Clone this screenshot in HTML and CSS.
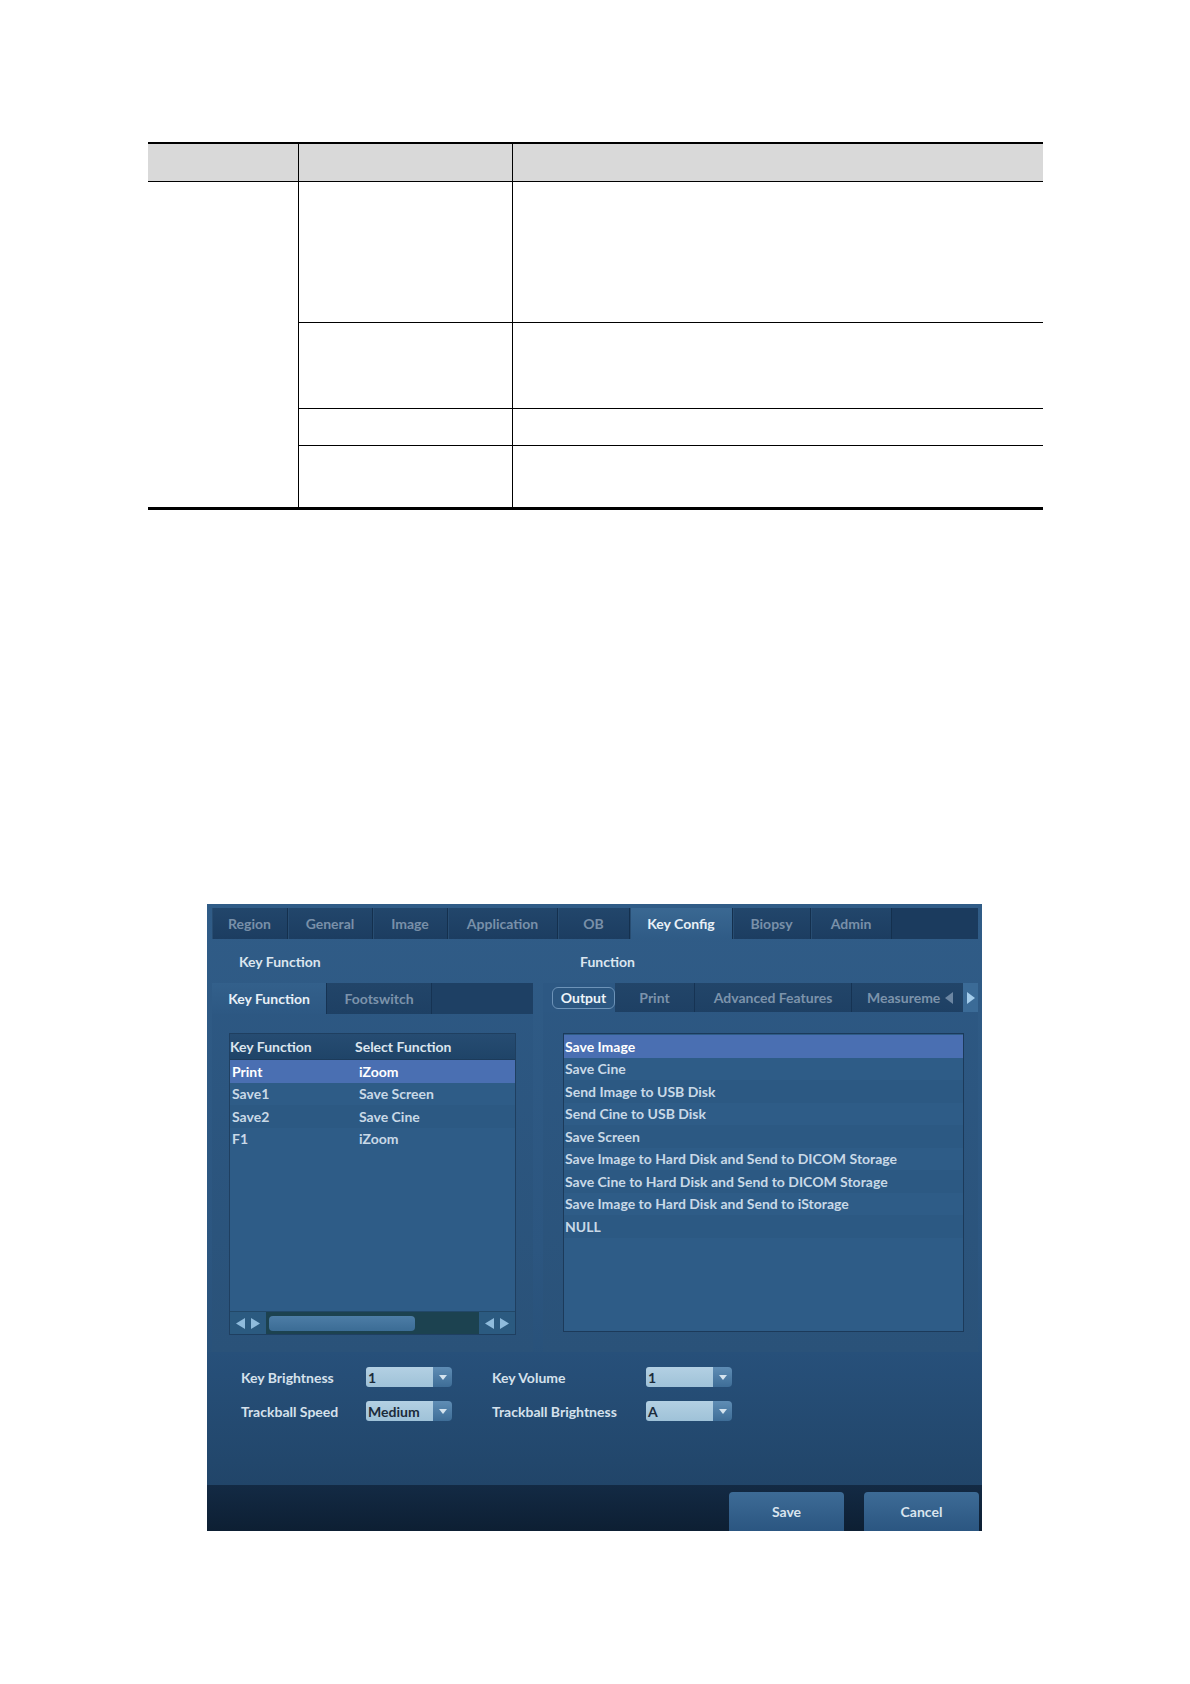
FILE: index.html
```html
<!DOCTYPE html>
<html lang="en">
<head>
<meta charset="utf-8">
<title>Key Config</title>
<link rel="stylesheet" href="styles.css">
</head>
<body>
<div class="page">
  <div class="spec">
    <div class="cell hd c1"></div>
    <div class="cell hd c2"></div>
    <div class="cell hd c3"></div>
    <div class="cell c1 span"></div>
    <div class="cell c2 rl"></div>
    <div class="cell c3 rl"></div>
    <div class="cell c2 rl"></div>
    <div class="cell c3 rl"></div>
    <div class="cell c2 rl"></div>
    <div class="cell c3 rl"></div>
    <div class="cell c2"></div>
    <div class="cell c3"></div>
  </div>

  <div class="ui">
    <div class="tabbar">
      <div class="tab w76">Region</div>
      <div class="tab w85">General</div>
      <div class="tab w75">Image</div>
      <div class="tab w110">Application</div>
      <div class="tab w72">OB</div>
      <div class="tab w103 active">Key Config</div>
      <div class="tab w78">Biopsy</div>
      <div class="tab w81">Admin</div>
    </div>

    <div class="heads">
      <div class="head-l">Key Function</div>
      <div class="head-r">Function</div>
    </div>

    <div class="panels">
      <div class="lpanel">
        <div class="subbar">
          <div class="stab active w115">Key Function</div>
          <div class="stab w105">Footswitch</div>
        </div>
        <div class="llist">
          <div class="lhead"><span class="k">Key Function</span><span class="s">Select Function</span></div>
          <div class="lbody">
            <div class="lrow sel"><span class="k">Print</span><span class="s">iZoom</span></div>
            <div class="lrow"><span class="k">Save1</span><span class="s">Save Screen</span></div>
            <div class="lrow alt"><span class="k">Save2</span><span class="s">Save Cine</span></div>
            <div class="lrow"><span class="k">F1</span><span class="s">iZoom</span></div>
          </div>
          <div class="scroll">
            <div class="arrows">
              <svg width="11" height="13" viewBox="0 0 11 13"><path d="M10 1 L1 6.5 L10 12 Z" fill="#8fbbdc"/></svg>
              <svg width="11" height="13" viewBox="0 0 11 13"><path d="M1 1 L10 6.5 L1 12 Z" fill="#8fbbdc"/></svg>
            </div>
            <div class="track"><div class="thumb"></div></div>
            <div class="arrows">
              <svg width="11" height="13" viewBox="0 0 11 13"><path d="M10 1 L1 6.5 L10 12 Z" fill="#8fbbdc"/></svg>
              <svg width="11" height="13" viewBox="0 0 11 13"><path d="M1 1 L10 6.5 L1 12 Z" fill="#8fbbdc"/></svg>
            </div>
          </div>
        </div>
      </div>

      <div class="rpanel">
        <div class="subbar rbar">
          <div class="pill-wrap"><div class="pill">Output</div></div>
          <div class="stab w80">Print</div>
          <div class="stab w157">Advanced Features</div>
          <div class="stab meas">Measureme
            <svg class="larr" width="10" height="14" viewBox="0 0 10 14"><path d="M9 1 L1 7 L9 13 Z" fill="#6c86a2"/></svg>
          </div>
          <div class="rarr">
            <svg width="10" height="14" viewBox="0 0 10 14"><path d="M1 1 L9 7 L1 13 Z" fill="#a4cdec"/></svg>
          </div>
        </div>
        <div class="rlist">
          <div class="rrow sel">Save Image</div>
          <div class="rrow">Save Cine</div>
          <div class="rrow alt">Send Image to USB Disk</div>
          <div class="rrow">Send Cine to USB Disk</div>
          <div class="rrow alt">Save Screen</div>
          <div class="rrow">Save Image to Hard Disk and Send to DICOM Storage</div>
          <div class="rrow alt">Save Cine to Hard Disk and Send to DICOM Storage</div>
          <div class="rrow">Save Image to Hard Disk and Send to iStorage</div>
          <div class="rrow alt">NULL</div>
        </div>
      </div>
    </div>

    <div class="settings">
      <div class="lbl">Key Brightness</div>
      <div class="dd"><div class="field">1</div><div class="btn"><svg width="8" height="5" viewBox="0 0 8 5"><path d="M0 0 H8 L4 5 Z" fill="#d5e4ef"/></svg></div></div>
      <div></div>
      <div class="lbl">Key Volume</div>
      <div class="dd"><div class="field">1</div><div class="btn"><svg width="8" height="5" viewBox="0 0 8 5"><path d="M0 0 H8 L4 5 Z" fill="#d5e4ef"/></svg></div></div>
      <div class="lbl">Trackball Speed</div>
      <div class="dd"><div class="field">Medium</div><div class="btn"><svg width="8" height="5" viewBox="0 0 8 5"><path d="M0 0 H8 L4 5 Z" fill="#d5e4ef"/></svg></div></div>
      <div></div>
      <div class="lbl">Trackball Brightness</div>
      <div class="dd"><div class="field">A</div><div class="btn"><svg width="8" height="5" viewBox="0 0 8 5"><path d="M0 0 H8 L4 5 Z" fill="#d5e4ef"/></svg></div></div>
    </div>

    <div class="footer">
      <div class="fbtn">Save</div>
      <div class="fbtn">Cancel</div>
    </div>
  </div>
</div>
</body>
</html>
```

FILE: styles.css
```css
* { box-sizing: border-box; }
html, body { margin: 0; padding: 0; background: #ffffff; }
body { font-family: Lato, "Open Sans", "Liberation Sans", sans-serif; }

.page { padding-top: 142px; }

/* ---------- blank spec table ---------- */
.spec {
  width: 895px;
  margin-left: 148px;
  border-top: 2px solid #000;
  border-bottom: 3px solid #000;
  display: grid;
  grid-template-columns: 150px 214px 531px;
  grid-template-rows: 38px 141px 86px 37px 61px;
}
.cell { background: #fff; }
.cell.hd { background: #d9d9d9; border-bottom: 1px solid #000; }
.cell.c2, .cell.c3 { border-left: 1px solid #000; }
.cell.rl { border-bottom: 1px solid #000; }
.cell.span { grid-row: 2 / span 4; }

/* ---------- ultrasound UI ---------- */
.ui {
  width: 775px;
  height: 627px;
  margin: 394px 0 0 207px;
  padding-top: 4px;
  background: linear-gradient(180deg, #305c87 0%, #2c5680 55%, #234a70 100%);
  display: flex;
  flex-direction: column;
  color: #c9d9e7;
  font-weight: 700;
  font-size: 14px;
}

.tabbar {
  margin: 0 4px 0 5px;
  height: 31px;
  background: #1b3b5e;
  display: flex;
}
.tab {
  display: flex;
  align-items: center;
  justify-content: center;
  color: #7990a9;
  background: linear-gradient(180deg, #22466b 0%, #1c3d61 100%);
  border-right: 1px solid #14304e;
  box-shadow: inset 1px 0 0 #284d72;
}
.tab.active {
  color: #e8f0f7;
  background: linear-gradient(180deg, #3a6892 0%, #2f5b86 100%);
}
.w72 { width: 72px; } .w75 { width: 75px; } .w76 { width: 76px; }
.w78 { width: 78px; } .w80 { width: 80px; } .w81 { width: 81px; }
.w85 { width: 85px; } .w103 { width: 103px; } .w105 { width: 105px; }
.w110 { width: 110px; } .w115 { width: 115px; } .w157 { width: 157px; }

.heads {
  height: 44px;
  display: flex;
  align-items: center;
  color: #dce6ef;
}
.head-l { width: 373px; padding-left: 32px; }

.panels {
  display: flex;
  gap: 10px;
  height: 369px;
  padding-left: 5px;
}
.lpanel {
  width: 321px;
  background: linear-gradient(180deg, #2d5883 0%, #2a5279 100%);
  display: flex;
  flex-direction: column;
}
.rpanel {
  width: 435px;
  background: linear-gradient(180deg, #2d5883 0%, #2a5279 100%);
  display: flex;
  flex-direction: column;
}

.subbar {
  height: 31px;
  background: #1e4064;
  display: flex;
  flex-shrink: 0;
}
.rbar { height: 29px; }
.stab {
  display: flex;
  align-items: center;
  justify-content: center;
  color: #7c93ab;
  background: linear-gradient(180deg, #224569 0%, #1e4064 100%);
  border-right: 1px solid #163353;
}
.stab.active {
  color: #e8f0f7;
  background: linear-gradient(180deg, #33608b 0%, #2d5883 100%);
}
.pill-wrap {
  width: 72px;
  display: flex;
  align-items: center;
  padding-left: 9px;
  background: #2d5883;
}
.pill {
  width: 63px;
  height: 22px;
  border: 1px solid #6d93b8;
  border-radius: 6px;
  background: #2c5781;
  color: #eef4f9;
  display: flex;
  align-items: center;
  justify-content: center;
}
.meas {
  width: 111px;
  justify-content: flex-start;
  padding-left: 15px;
  gap: 4px;
  border-right: none;
  white-space: nowrap;
}
.rarr {
  width: 15px;
  background: #3b6b97;
  display: flex;
  align-items: center;
  justify-content: center;
}

/* left list */
.llist {
  margin: 19px 0 0 17px;
  width: 287px;
  height: 302px;
  border: 1px solid #1f3f60;
  background: #2e5c87;
  display: flex;
  flex-direction: column;
}
.lhead {
  height: 26px;
  display: flex;
  align-items: center;
  background: linear-gradient(180deg, #264c72 0%, #1f4468 100%);
  color: #dbe5ee;
  border-bottom: 1px solid #1c3b5b;
}
.lhead .k { width: 125px; }
.lbody { flex: 1; }
.lrow {
  height: 22.5px;
  display: flex;
  align-items: center;
}
.lrow .k { width: 126px; padding-left: 2px; }
.lrow .s { padding-left: 3px; }
.lrow.sel, .rrow.sel { background: #4a6fb2; color: #ffffff; }
.lrow.alt, .rrow.alt { background: #2c5983; }

.scroll {
  height: 23px;
  display: flex;
  background: #2b5a80;
  border-top: 1px solid #224868;
}
.arrows {
  width: 36px;
  display: flex;
  align-items: center;
  justify-content: center;
  gap: 4px;
}
.track {
  flex: 1;
  background: #1c4250;
  display: flex;
  align-items: center;
  padding-left: 3px;
}
.thumb {
  width: 146px;
  height: 15px;
  border-radius: 4px;
  background: linear-gradient(180deg, #4d7da6 0%, #3b6c95 100%);
}

/* right list */
.rlist {
  margin: 21px 0 0 20px;
  width: 401px;
  height: 299px;
  border: 1px solid #1c3a5a;
  background: #2e5c87;
  padding-top: 1px;
}
.rrow {
  height: 22.5px;
  display: flex;
  align-items: center;
  padding-left: 1px;
  white-space: nowrap;
}

/* settings */
.settings {
  height: 133px;
  padding: 15px 0 0 34px;
  display: grid;
  grid-template-columns: 125px 86px 40px 154px 86px;
  grid-template-rows: 20px 20px;
  row-gap: 14px;
  align-items: center;
  background: linear-gradient(180deg, #27507a 0%, #214569 100%);
}
.lbl { color: #d5e1ec; white-space: nowrap; }
.dd { display: flex; height: 20px; }
.field {
  width: 67px;
  background: linear-gradient(180deg, #b3d0e3 0%, #9fc2d8 100%);
  border-radius: 3px 0 0 3px;
  color: #1b2b3b;
  padding-left: 2px;
  display: flex;
  align-items: center;
}
.btn {
  width: 19px;
  background: linear-gradient(180deg, #5f8db5 0%, #3e6d97 100%);
  border-radius: 0 4px 4px 0;
  display: flex;
  align-items: center;
  justify-content: center;
}

/* footer */
.footer {
  height: 46px;
  background: linear-gradient(180deg, #132a44 0%, #0d1f33 100%);
  display: flex;
  justify-content: flex-end;
  align-items: flex-end;
  gap: 20px;
  padding-right: 3px;
}
.fbtn {
  width: 115px;
  height: 39px;
  border-radius: 4px 4px 0 0;
  background: linear-gradient(180deg, #3d6b96 0%, #2b5681 100%);
  color: #d9e4ee;
  display: flex;
  align-items: center;
  justify-content: center;
}
```
